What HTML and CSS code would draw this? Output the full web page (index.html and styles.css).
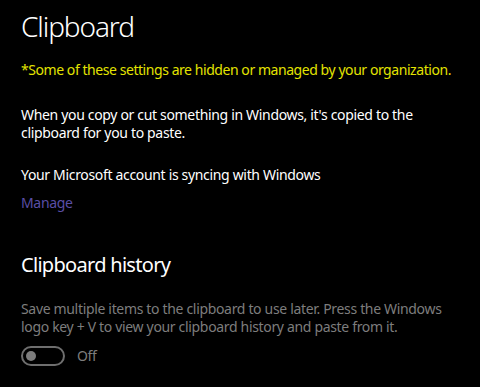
FILE: index.html
```html
<!DOCTYPE html>
<html>
<head>
    <link rel="stylesheet" href="styles.css">
</head>
<body>
    <h1 class="title">Clipboard</h1>

    <p class="notice">*Some of these settings are hidden or managed by your organization.</p>

    <p class="text intro">When you copy or cut something in Windows, it's copied to the clipboard for you to paste.</p>

    <p class="text sync">Your Microsoft account is syncing with Windows</p>
    <a class="link" href="#">Manage</a>

    <h2 class="section">Clipboard history</h2>

    <p class="text muted">Save multiple items to the clipboard to use later. Press the Windows logo key + V to view your clipboard history and paste from it.</p>

    <div class="toggle-row">
        <span class="toggle"><span class="knob"></span></span>
        <span class="toggle-label">Off</span>
    </div>
</body>
</html>
```

FILE: styles.css
```css
body {
    font-family: "Noto Sans", "Open Sans", sans-serif;
    background-color: #000;
    color: #fff;
    margin: 0;
    padding: 8px 10px 0 21px;
    width: 480px;
    height: 387px;
    box-sizing: border-box;
    overflow: hidden;
    letter-spacing: -0.33px;
}
.title {
    font-size: 28px;
    font-weight: 300;
    line-height: 36px;
    letter-spacing: -1.1px;
    margin: 0;
}
.notice {
    color: #e3e300;
    font-size: 14px;
    line-height: 20px;
    letter-spacing: -0.44px;
    margin: 16px 0 0 0;
}
.text {
    font-size: 14px;
    line-height: 18px;
    margin: 0;
}
.intro {
    margin-top: 26px;
}
.sync {
    margin-top: 24px;
}
.link {
    display: block;
    color: #5a4ea6;
    text-decoration: none;
    font-size: 14px;
    line-height: 19px;
    margin-top: 9px;
}
.section {
    font-size: 20px;
    font-weight: 400;
    line-height: 28px;
    letter-spacing: -0.7px;
    margin: 39px 0 0 0;
}
.muted {
    color: #7d7d7d;
    margin-top: 21px;
}
.toggle-row {
    display: flex;
    align-items: center;
    gap: 12px;
    margin-top: 10px;
}
.toggle {
    width: 44px;
    height: 20px;
    box-sizing: border-box;
    border: 2px solid #6e6e6e;
    border-radius: 10px;
    display: flex;
    align-items: center;
    padding-left: 3px;
}
.knob {
    width: 10px;
    height: 10px;
    border-radius: 50%;
    background-color: #7d7d7d;
}
.toggle-label {
    color: #7d7d7d;
    font-size: 14px;
    line-height: 20px;
}
```
